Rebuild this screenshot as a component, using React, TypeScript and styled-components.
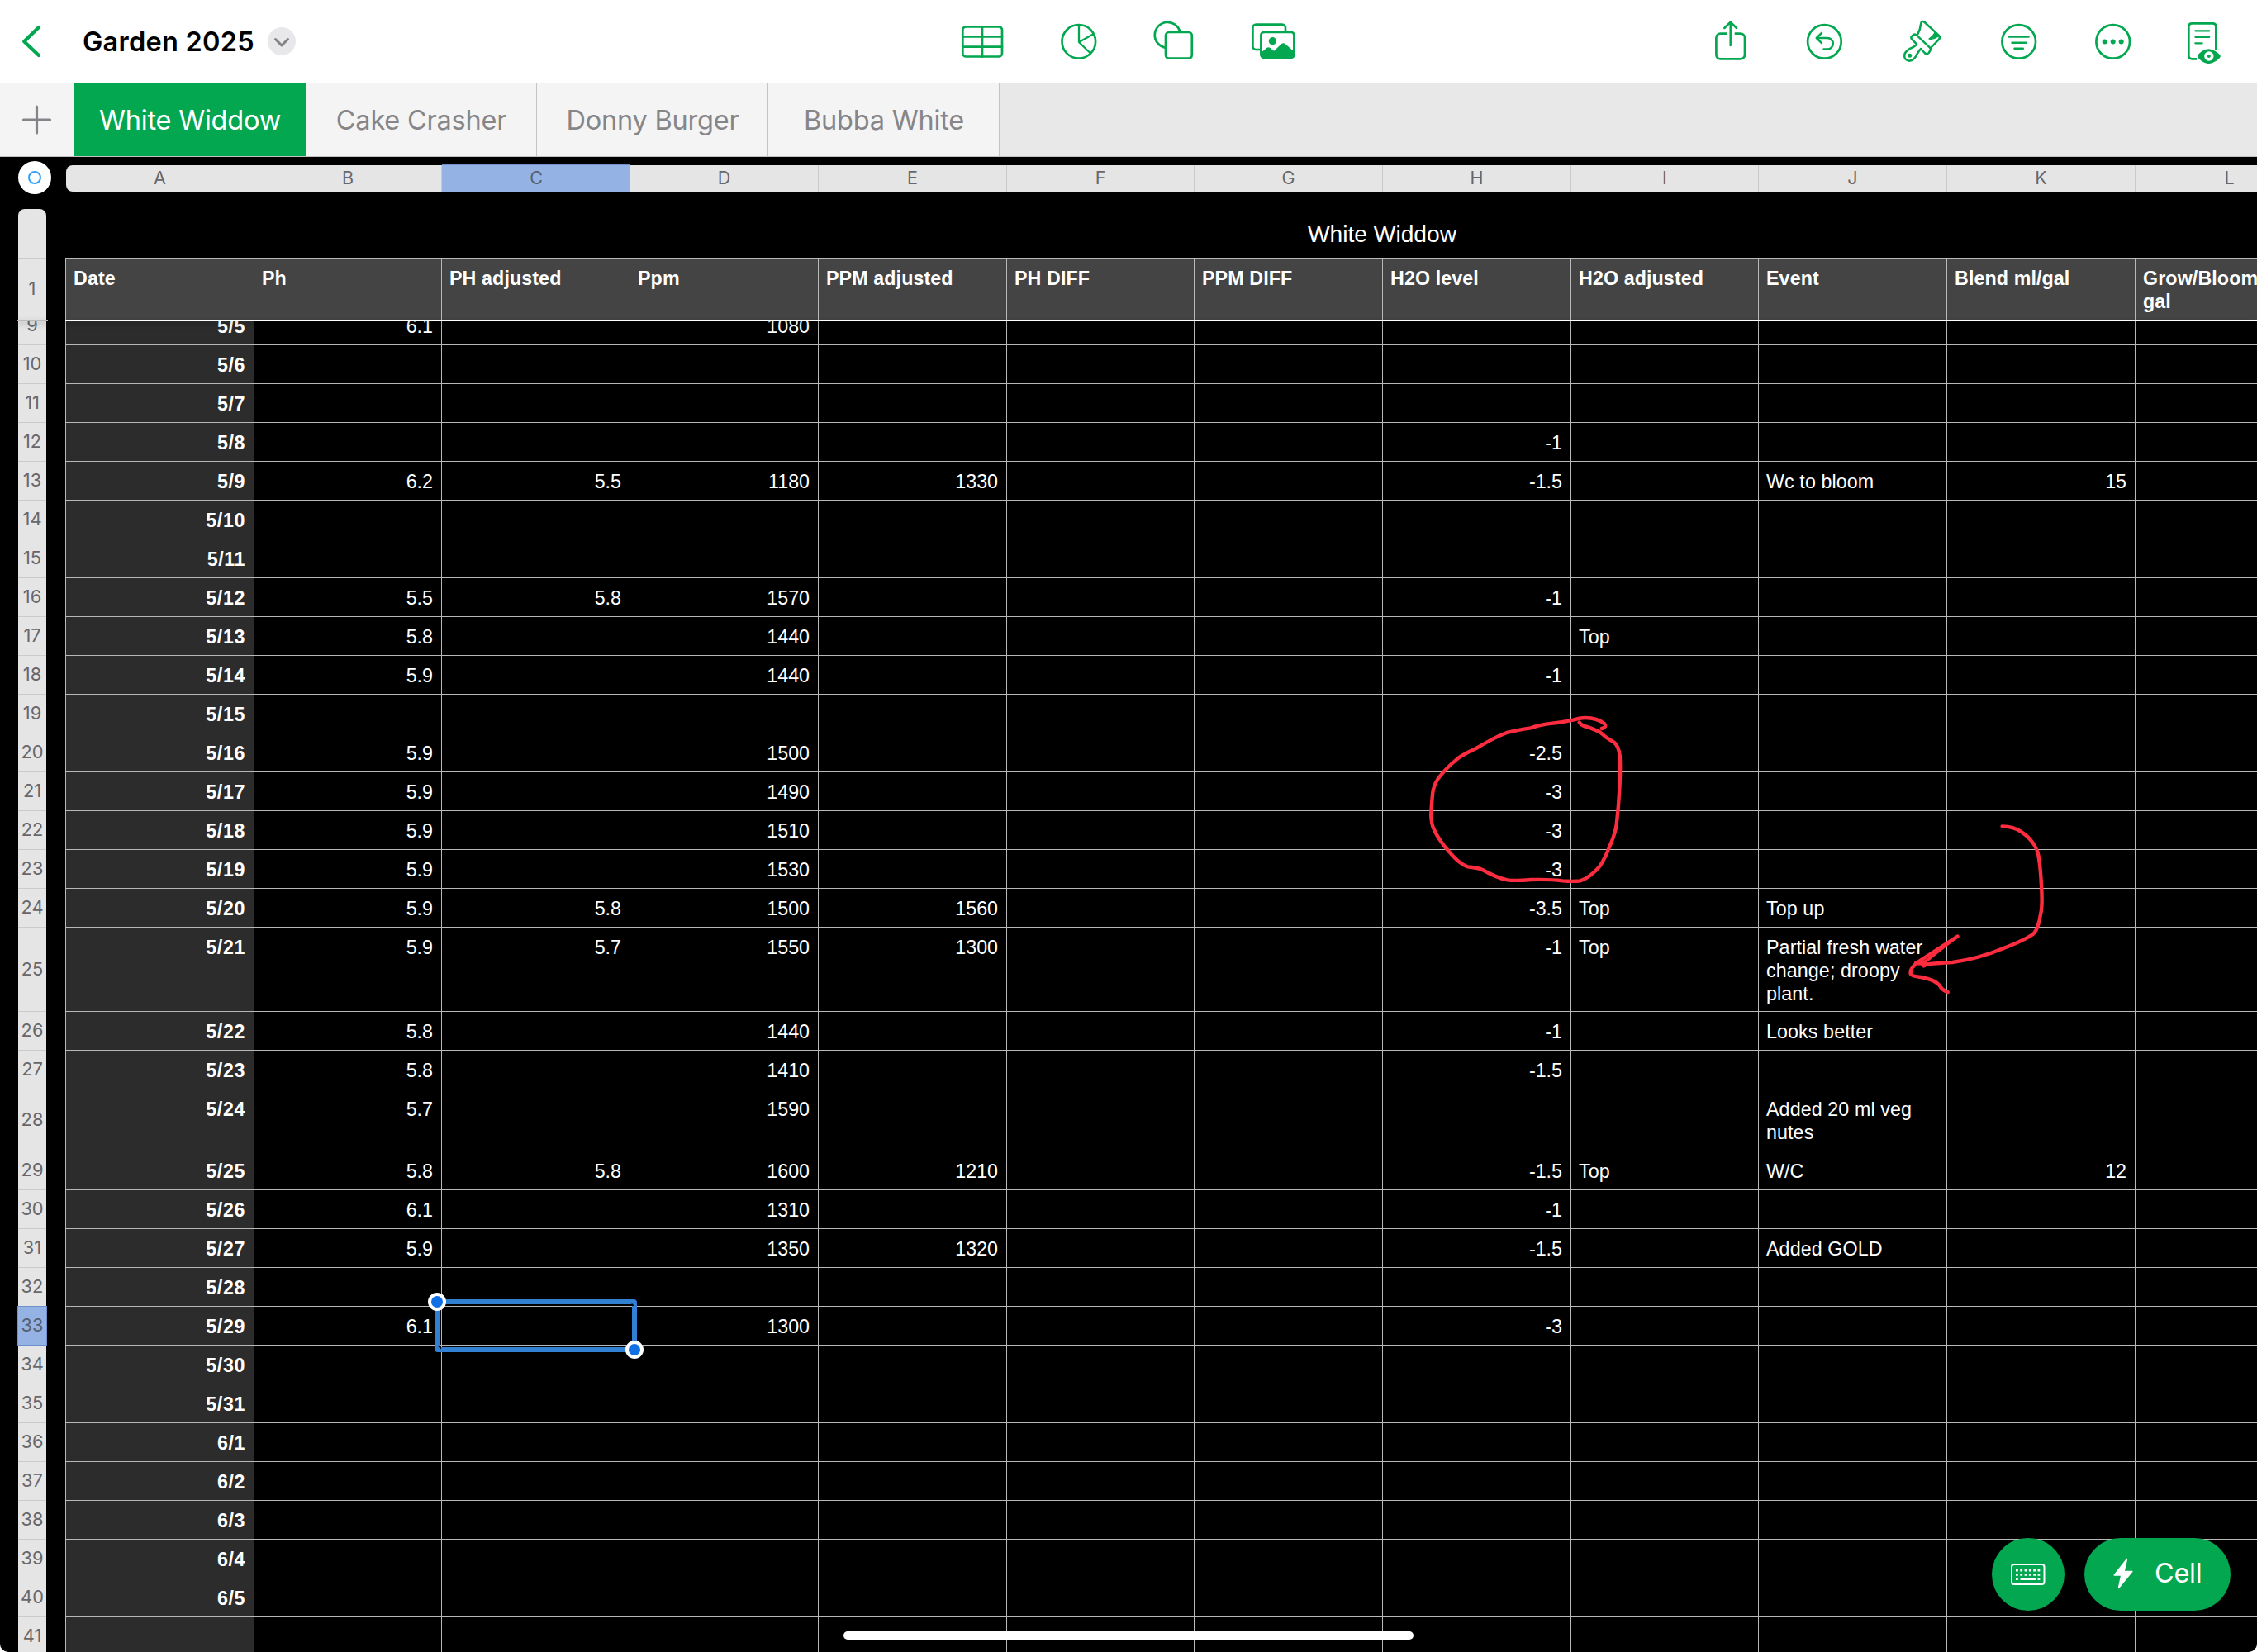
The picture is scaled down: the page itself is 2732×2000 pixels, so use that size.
import React from "react";
import styled, { createGlobalStyle, css } from "styled-components";

const GREEN = "#03a750";
const LINE = "#b8b8b8";
const UI = `Inter, "Liberation Sans", sans-serif`;
const SHEET = `"Liberation Sans", Arial, sans-serif`;

const GlobalStyle = createGlobalStyle`
  html, body { margin: 0; padding: 0; background: #fff; }
  *, *::before, *::after { box-sizing: border-box; }
  button { border: 0; padding: 0; background: none; font: inherit; color: inherit; }
  svg { display: block; overflow: visible; }
`;

const Screen = styled.div`
  width: 2732px;
  height: 2000px;
  display: flex;
  flex-direction: column;
  overflow: hidden;
  background: #000;
  border-radius: 0 0 10px 10px;
  font-family: ${UI};
`;

/* ---------- toolbar ---------- */

const Toolbar = styled.header`
  flex: none;
  height: 101px;
  display: grid;
  grid-template-columns: 1159px 1fr auto;
  align-items: center;
  padding-right: 34px;
  background: #fff;
  border-bottom: 1px solid #8a8a8a;
`;

const DocumentArea = styled.div`
  display: flex;
  align-items: center;
  padding-left: 26px;
`;

const BackButton = styled.button`
  width: 24px;
  height: 40px;
  margin-right: 50px;
`;

const DocumentTitle = styled.h1`
  margin: 0;
  width: 208px;
  padding-top: 1px;
  font-size: 32.5px;
  font-weight: 600;
  line-height: 40px;
  letter-spacing: 0.25px;
  white-space: nowrap;
  color: #000;
`;

const MenuToggle = styled.button`
  width: 34px;
  height: 34px;
  margin-left: 16px;
  border-radius: 50%;
  background: #e8e8ea;
`;

const ToolGroup = styled.div<{ $gap: number }>`
  display: flex;
  gap: ${(p) => p.$gap}px;
  color: ${GREEN};
`;

const ToolIcon = styled.svg.attrs({
  viewBox: "0 0 60 60",
  fill: "none",
  stroke: "currentColor",
  strokeWidth: 2.7,
  strokeLinecap: "round",
  strokeLinejoin: "round",
})`
  width: 60px;
  height: 60px;
`;

/* ---------- sheet tabs ---------- */

const TabBar = styled.nav`
  flex: none;
  height: 89px;
  display: flex;
  background: #e8e8e8;
  border-bottom: 1px solid #c2c2c2;
`;

const AddSheet = styled.button`
  width: 90px;
  display: flex;
  align-items: center;
  justify-content: center;
  background: #f4f4f4;
`;

const Tab = styled.button<{ $active?: boolean }>`
  width: 280px;
  padding: 1px 0 0 1px;
  border-right: 1px solid #c4c4c4;
  background: #f4f4f4;
  color: #868689;
  font-size: 32.5px;
  line-height: 40px;
  letter-spacing: -0.22px;
  white-space: nowrap;
  ${(p) =>
    p.$active &&
    css`
      background: ${GREEN};
      border-right-color: ${GREEN};
      color: #fff;
    `}
`;

/* ---------- spreadsheet ---------- */

const Canvas = styled.main`
  position: relative;
  flex: 1;
  min-height: 0;
  display: flex;
  flex-direction: column;
  overflow: hidden;
`;

const RulerRow = styled.div`
  flex: none;
  height: 45px;
  display: flex;
  align-items: flex-start;
  padding: 5px 0 0 22px;
`;

const Origin = styled.div`
  flex: none;
  width: 40px;
  height: 40px;
  margin-right: 18px;
  display: flex;
  align-items: center;
  justify-content: center;
  border-radius: 50%;
  background: #fff;
  &::after {
    content: "";
    width: 16px;
    height: 16px;
    border: 2px solid #30a0fb;
    border-radius: 50%;
  }
`;

const Ruler = styled.div`
  display: flex;
  margin-top: 5px;
  height: 32px;
`;

const ColumnLabel = styled.div<{ $w: number; $selected?: boolean }>`
  flex: none;
  width: ${(p) => p.$w}px;
  height: 32px;
  border-right: 1px solid #cbcbcd;
  background: #e5e5e5;
  color: #67676c;
  font-size: 21.5px;
  line-height: 31px;
  text-align: center;
  &:first-child {
    border-radius: 8px 0 0 8px;
  }
  ${(p) =>
    p.$selected &&
    css`
      height: 34px;
      margin-top: -1px;
      background: #95b2e4;
      border: solid #6e90cc;
      border-width: 1px 0 1px 0;
      color: #55606f;
    `}
`;

const TitleRow = styled.div`
  flex: none;
  height: 77px;
  display: flex;
  padding-left: 22px;
`;

const RowRailCap = styled.div`
  flex: none;
  width: 34px;
  margin: 18px 23px 0 0;
  border-radius: 8px 8px 0 0;
  background: #e5e5e5;
`;

const TableTitle = styled.h2`
  flex: none;
  width: 3188px;
  margin: 0;
  padding: 32px 0 0 0;
  font: 400 28.2px/32px ${SHEET};
  color: #fff;
  text-align: center;
`;

const Row = styled.div<{ $h: number }>`
  flex: none;
  height: ${(p) => p.$h}px;
  display: flex;
  padding-left: 22px;
`;

const RowNumber = styled.div<{ $selected?: boolean }>`
  flex: none;
  width: 34px;
  margin-right: 23px;
  padding-bottom: 1.5px;
  display: flex;
  align-items: center;
  justify-content: center;
  background: #e5e5e5;
  border-bottom: 1px solid #cbcbcd;
  color: #67676c;
  font-size: 21.8px;
  ${(p) =>
    p.$selected &&
    css`
      width: 36px;
      margin: -1px 22px 0 -1px;
      background: #95b2e4;
      border: 1px solid #6e90cc;
      color: #55606f;
    `}
`;

const HeaderNumber = styled(RowNumber)`
  border-bottom: 0;
  border-top: 1px solid #cbcbcd;
  padding-bottom: 3px;
`;

const Cell = styled.div<{ $w: number; $text?: boolean; $selected?: boolean }>`
  flex: none;
  position: ${(p) => (p.$selected ? "relative" : "static")};
  width: ${(p) => p.$w}px;
  padding: 10px 10px 0 9px;
  border: solid ${LINE};
  border-width: 0 1px 1px 0;
  color: #fff;
  font: 400 23.25px/28px ${SHEET};
  letter-spacing: ${(p) => (p.$text ? 0.1 : 0)}px;
  text-align: ${(p) => (p.$text ? "left" : "right")};
  white-space: pre;
`;

const DateCell = styled(Cell)`
  border-left: 1px solid ${LINE};
  border-right-color: #fff;
  background: #2c2c2c;
  font-weight: 700;
  letter-spacing: 0.6px;
`;

const HeaderCell = styled(Cell)`
  border-width: 1px 1px 0 0;
  background: #444;
  font-weight: 700;
  text-align: left;
  &:nth-child(2) {
    border-left-width: 1px;
  }
`;

const FreezeLine = styled.div`
  flex: none;
  position: relative;
  z-index: 1;
  height: 2px;
  display: flex;
  padding-left: 20px;
  gap: 21px;
`;

const RailLine = styled.div`
  width: 38px;
  height: 2px;
  background: #fff;
  border-bottom: 1px solid #b9b9b9;
  box-shadow: 0 3px 6px rgba(0, 0, 0, 0.3);
`;

const TableLine = styled.div`
  flex: 1;
  background: #fff;
  box-shadow: 0 3px 6px rgba(0, 0, 0, 0.35);
`;

const Body = styled.div`
  flex: 1;
  min-height: 0;
  display: flex;
  flex-direction: column;
  overflow: hidden;
  & > :first-child {
    margin-top: -18px;
  }
`;

const Selection = styled.div`
  position: absolute;
  z-index: 2;
  left: -9px;
  top: -9px;
  width: 245px;
  height: 64px;
  border: 6px solid #3180d4;
  border-radius: 4px;
`;

const Handle = styled.span<{ $end?: boolean }>`
  position: absolute;
  width: 22px;
  height: 22px;
  border: 4px solid #fff;
  border-radius: 50%;
  background: #1170e6;
  ${(p) => (p.$end ? "right: -14px; bottom: -14px;" : "left: -14px; top: -14px;")}
`;

const Notches = styled.svg`
  position: absolute;
  left: -6px;
  top: -6px;
  width: 245px;
  height: 64px;
`;

const Ink = styled.svg`
  position: absolute;
  left: 0;
  top: 0;
  width: 2732px;
  height: 1810px;
  pointer-events: none;
`;

const Actions = styled.div`
  position: absolute;
  right: 32px;
  bottom: 50px;
  display: flex;
  gap: 24px;
`;

const RoundAction = styled.button`
  width: 88px;
  height: 88px;
  display: flex;
  align-items: center;
  justify-content: center;
  border-radius: 50%;
  background: ${GREEN};
`;

const CellAction = styled.button`
  width: 177px;
  height: 88px;
  display: flex;
  align-items: center;
  gap: 26px;
  padding: 0 0 2px 35px;
  border-radius: 44px;
  background: ${GREEN};
  color: #fff;
  font-size: 32.5px;
  line-height: 40px;
  letter-spacing: -0.3px;
`;

const HomeIndicator = styled.div`
  position: absolute;
  left: 1021px;
  bottom: 15px;
  width: 690px;
  height: 10px;
  border-radius: 5px;
  background: #fff;
`;

/* ---------- data ---------- */

const LETTERS = "ABCDEFGHIJKL".split("");
const WIDTHS = [228, 227, 228, 228, 228, 227, 228, 228, 227, 228, 228, 228];
const HEADERS = [
  "Date", "Ph", "PH adjusted", "Ppm", "PPM adjusted", "PH DIFF", "PPM DIFF",
  "H2O level", "H2O adjusted", "Event", "Blend ml/gal", "Grow/Bloom\ngal",
];
const TABS = ["White Widdow", "Cake Crasher", "Donny Burger", "Bubba White"];

type Entry = { n: number; date: string; h?: number; v?: Record<string, string> };

const ROWS: Entry[] = [
  { n: 9, date: "5/5", v: { B: "6.1", D: "1080" } },
  { n: 10, date: "5/6" },
  { n: 11, date: "5/7" },
  { n: 12, date: "5/8", v: { H: "-1" } },
  { n: 13, date: "5/9", v: { B: "6.2", C: "5.5", D: "1180", E: "1330", H: "-1.5", J: "Wc to bloom", K: "15" } },
  { n: 14, date: "5/10" },
  { n: 15, date: "5/11" },
  { n: 16, date: "5/12", v: { B: "5.5", C: "5.8", D: "1570", H: "-1" } },
  { n: 17, date: "5/13", v: { B: "5.8", D: "1440", I: "Top" } },
  { n: 18, date: "5/14", v: { B: "5.9", D: "1440", H: "-1" } },
  { n: 19, date: "5/15" },
  { n: 20, date: "5/16", v: { B: "5.9", D: "1500", H: "-2.5" } },
  { n: 21, date: "5/17", v: { B: "5.9", D: "1490", H: "-3" } },
  { n: 22, date: "5/18", v: { B: "5.9", D: "1510", H: "-3" } },
  { n: 23, date: "5/19", v: { B: "5.9", D: "1530", H: "-3" } },
  { n: 24, date: "5/20", v: { B: "5.9", C: "5.8", D: "1500", E: "1560", H: "-3.5", I: "Top", J: "Top up" } },
  { n: 25, date: "5/21", h: 102, v: { B: "5.9", C: "5.7", D: "1550", E: "1300", H: "-1", I: "Top", J: "Partial fresh water\nchange; droopy\nplant." } },
  { n: 26, date: "5/22", v: { B: "5.8", D: "1440", H: "-1", J: "Looks better" } },
  { n: 27, date: "5/23", v: { B: "5.8", D: "1410", H: "-1.5" } },
  { n: 28, date: "5/24", h: 75, v: { B: "5.7", D: "1590", J: "Added 20 ml veg\nnutes" } },
  { n: 29, date: "5/25", v: { B: "5.8", C: "5.8", D: "1600", E: "1210", H: "-1.5", I: "Top", J: "W/C", K: "12" } },
  { n: 30, date: "5/26", v: { B: "6.1", D: "1310", H: "-1" } },
  { n: 31, date: "5/27", v: { B: "5.9", D: "1350", E: "1320", H: "-1.5", J: "Added GOLD" } },
  { n: 32, date: "5/28" },
  { n: 33, date: "5/29", v: { B: "6.1", D: "1300", H: "-3" } },
  { n: 34, date: "5/30" },
  { n: 35, date: "5/31" },
  { n: 36, date: "6/1" },
  { n: 37, date: "6/2" },
  { n: 38, date: "6/3" },
  { n: 39, date: "6/4" },
  { n: 40, date: "6/5" },
  { n: 41, date: "" },
];

/* ---------- icons ---------- */

const InsertTools = () => (
  <ToolGroup $gap={57}>
    <ToolIcon>
      <rect x="6.3" y="12.3" width="47.7" height="36.2" rx="4" />
      <path d="M30 12.3v36.2M6.3 24.3H54M6.3 36.6H54" />
    </ToolIcon>
    <ToolIcon>
      <circle cx="29.8" cy="30.3" r="20.3" />
      <path strokeWidth="2.3" d="M30 10.5V31L47 21.5M30 31l13.5 13" />
    </ToolIcon>
    <ToolIcon strokeLinecap="butt">
      <path d="M35.3 18.6A15.5 15.5 0 1 0 17.6 37.7" />
      <rect x="18" y="19" width="31.8" height="31.6" rx="4" />
    </ToolIcon>
    <ToolIcon strokeLinecap="butt">
      <path d="M46 18.5V13.6a4 4 0 0 0-4-4H10.4a4 4 0 0 0-4 4V36a4 4 0 0 0 4 4H16" />
      <rect x="16.4" y="19" width="40" height="30.8" rx="3.5" />
      <circle cx="30.4" cy="29.7" r="4.6" fill="currentColor" stroke="none" />
      <path
        fill="currentColor"
        stroke="none"
        d="M16.4 43.8l7.2-6q1.8-1.3 3.6 0l4.9 4 8.8-8.5q2.5-2 5 0L56.4 42.5V47a3.5 3.5 0 0 1-3.5 3.5H20a3.5 3.5 0 0 1-3.6-3.5z"
      />
    </ToolIcon>
  </ToolGroup>
);

const DocumentTools = () => (
  <ToolGroup $gap={55}>
    <ToolIcon>
      <path strokeLinecap="butt" d="M27 20.7H19.4a5 5 0 0 0-5 5v20.6a5 5 0 0 0 5 5h24.6a5 5 0 0 0 5-5V25.7a5 5 0 0 0-5-5H36.7" />
      <path d="M31.7 35V7M24.3 14l7.4-7.4L39.1 14" strokeWidth="2.5" />
    </ToolIcon>
    <ToolIcon>
      <circle cx="30.4" cy="30.4" r="20.3" />
      <path strokeWidth="2.5" d="M27 19.8L20.8 26l6.2 6.2M21.2 26H34a6.8 6.8 0 0 1 0 13.6h-4.5" />
    </ToolIcon>
    <ToolIcon>
      <g transform="translate(-233 -10) scale(.33333)" strokeWidth="7.5">
        <path d="M784 94Q793 78 795 58Q797 42 809 51L860 98Q867 105 861 113L831 144" />
        <path d="M780 130L763 113Q757 106 763 101L768 97Q774 92 780 98L828 143Q833 148 829 154L824 162Q817 170 809 162L795 147Q790 153 782 165Q772 190 753 191Q733 188 736 168Q738 158 757 146Q776 138 780 130Z" />
        <circle cx="755" cy="172" r="7.5" fill="currentColor" stroke="none" />
        <path d="M846 88Q842 100 825 111Q841 115 858 102Z" fill="currentColor" strokeWidth="4" />
      </g>
    </ToolIcon>
    <ToolIcon>
      <circle cx="35.7" cy="30.4" r="20.3" />
      <path strokeWidth="2.5" d="M24 24.5h23.5M27.500 31.700h16.800M30.500 38.700h10.300" />
    </ToolIcon>
    <ToolIcon>
      <circle cx="34.7" cy="30.4" r="20.3" />
      <g fill="currentColor" stroke="none">
        <circle cx="24.7" cy="30.4" r="3" />
        <circle cx="34.7" cy="30.4" r="3" />
        <circle cx="44.7" cy="30.4" r="3" />
      </g>
    </ToolIcon>
    <ToolIcon>
      <g transform="translate(-238 -10) scale(.33333)" strokeWidth="8">
        <path strokeLinecap="butt" d="M847 150V67Q847 55 835 55H760Q748 55 748 67V172Q748 184 760 184H777" />
        <path strokeWidth="6.5" d="M772 82h51M772 104.500h51M772 127h25" />
        <path
          fill="currentColor"
          stroke="none"
          d="M779 174Q783 165 796 156Q820 140 845 156Q860 165 864 174Q860 184 845 193Q820 210 796 193Q783 184 779 174Z"
        />
        <circle cx="821.5" cy="174" r="17" fill="#fff" stroke="none" />
        <circle cx="821.5" cy="174" r="6" fill="currentColor" stroke="none" />
      </g>
    </ToolIcon>
  </ToolGroup>
);

const KeyboardIcon = () => (
  <svg width="42" height="26" viewBox="0 0 42 26" fill="none" stroke="#fff">
    <rect x="1" y="1" width="39.5" height="24" rx="3" strokeWidth="2" />
    {[8, 13.3].map((y) => (
      <path key={y} d={`M6 ${y}h30`} strokeWidth="2.8" strokeDasharray="2.8 2.5" />
    ))}
    <path d="M6 18.600h2.800M11.500 18.600h18.800M32.500 18.600h2.800" strokeWidth="2.8" />
  </svg>
);

/* Freehand pen strokes over the grid: a loop round the level readings and an arrow to the note. */
const Markup = () => (
  <Ink viewBox="0 190 2732 1810" fill="none" stroke="#fd2c3f" strokeWidth="4.4" strokeLinecap="round" strokeLinejoin="round">
    <g transform="translate(1700 840) scale(.5103 .33333)">
      <path
        vectorEffect="non-scaling-stroke"
        d="M468 126Q481 121 474 108Q458 88 428 87Q415 87 400 95Q370 105 336 110Q315 115 300 124Q265 132 243 141Q220 153 170 198Q135 223 124 238Q95 275 79 310Q69 335 67 360Q64 410 63 440Q64 475 70 492Q82 533 107 575Q130 618 150 628Q175 632 185 639Q220 669 244 676Q265 680 300 675Q345 673 375 679Q400 682 417 679Q440 668 464 625Q478 590 485 560Q500 510 503 475Q508 410 510 350Q513 270 511 225Q508 190 498 177Q478 160 463 138Q440 122 426 117Q418 112 415 104"
      />
      <path
        vectorEffect="non-scaling-stroke"
        d="M1418 481Q1445 482 1462 500Q1492 530 1502 575Q1508 610 1511 700Q1514 770 1509 800Q1504 850 1494 868Q1485 885 1420 925Q1360 963 1300 975Q1260 978 1232 983"
      />
      <path vectorEffect="non-scaling-stroke" d="M1312 881Q1270 930 1250 955Q1235 980 1213 978" strokeWidth="3.600" />
      <path vectorEffect="non-scaling-stroke" d="M1312 881L1220 972Q1197 998 1201 1018Q1203 1025 1225 1029Q1256 1037 1269 1058Q1275 1076 1289 1083" />
      <path vectorEffect="non-scaling-stroke" d="M1213 978L1240 981L1232 988" />
    </g>
  </Ink>
);

export default function App() {
  return (
    <Screen>
      <GlobalStyle />
      <Toolbar>
        <DocumentArea>
          <BackButton aria-label="Back">
            <svg width="24" height="40" viewBox="0 0 24 40" fill="none" stroke={GREEN} strokeWidth="4.3" strokeLinecap="round" strokeLinejoin="round">
              <path d="M21 3L3.200 20.300 21 37" />
            </svg>
          </BackButton>
          <DocumentTitle>Garden 2025</DocumentTitle>
          <MenuToggle aria-label="Document options">
            <svg width="34" height="34" viewBox="0 0 34 34" fill="none" stroke="#828286" strokeWidth="3" strokeLinecap="round" strokeLinejoin="round">
              <path d="M9.500 14.500L17 22l7.500-7.500" />
            </svg>
          </MenuToggle>
        </DocumentArea>
        <InsertTools />
        <DocumentTools />
      </Toolbar>

      <TabBar>
        <AddSheet aria-label="Add sheet">
          <svg width="36" height="36" viewBox="0 0 36 36" stroke="#848488" strokeWidth="3.2" strokeLinecap="round">
            <path d="M17.500 2v32M1.500 18h32" />
          </svg>
        </AddSheet>
        {TABS.map((t, i) => (
          <Tab key={t} $active={i === 0}>{t}</Tab>
        ))}
      </TabBar>

      <Canvas>
        <RulerRow>
          <Origin />
          <Ruler>
            {LETTERS.map((l, i) => (
              <ColumnLabel key={l} $w={WIDTHS[i]} $selected={l === "C"}>{l}</ColumnLabel>
            ))}
          </Ruler>
        </RulerRow>
        <TitleRow>
          <RowRailCap />
          <TableTitle>White Widdow</TableTitle>
        </TitleRow>
        <Row $h={75}>
          <HeaderNumber>1</HeaderNumber>
          {HEADERS.map((h, i) => (
            <HeaderCell key={h} $w={WIDTHS[i] + (i === 0 ? 1 : 0)} $text>{h}</HeaderCell>
          ))}
        </Row>
        <FreezeLine>
          <RailLine />
          <TableLine />
        </FreezeLine>
        <Body>
          {ROWS.map((r) => (
            <Row key={r.n} $h={r.h ?? 47}>
              <RowNumber $selected={r.n === 33}>{r.n}</RowNumber>
              <DateCell $w={WIDTHS[0] + 1}>{r.date}</DateCell>
              {LETTERS.slice(1).map((l, i) => {
                const picked = r.n === 33 && l === "C";
                return (
                  <Cell key={l} $w={WIDTHS[i + 1]} $text={l === "I" || l === "J"} $selected={picked}>
                    {r.v?.[l]}
                    {picked && (
                      <Selection>
                        <Notches viewBox="0 0 245 64">
                          <path d="M237.500 3.500L242 8H239V6ZM3 56H6L8 58V60.500Z" fill="#000" />
                        </Notches>
                        <Handle />
                        <Handle $end />
                      </Selection>
                    )}
                  </Cell>
                );
              })}
            </Row>
          ))}
        </Body>
        <Markup />
        <Actions>
          <RoundAction aria-label="Keyboard">
            <KeyboardIcon />
          </RoundAction>
          <CellAction>
            <svg width="24" height="38" viewBox="0 0 24 38" fill="#fff" stroke="#fff" strokeWidth="1.5" strokeLinejoin="round">
              <path d="M16.500 1.500L1.200 21H9.800L6.500 36.500 22.800 16.500H13z" />
            </svg>
            Cell
          </CellAction>
        </Actions>
        <HomeIndicator />
      </Canvas>
    </Screen>
  );
}
